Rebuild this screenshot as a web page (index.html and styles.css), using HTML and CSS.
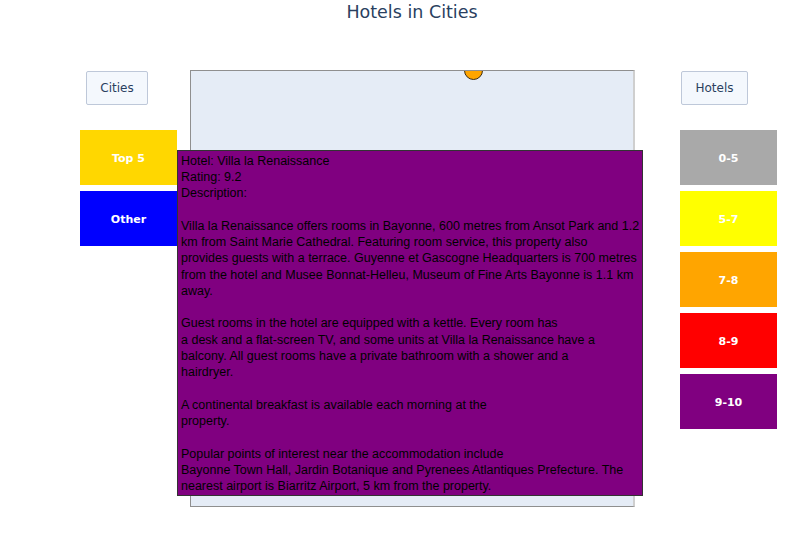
FILE: index.html
```html
<!DOCTYPE html>
<html>
<head>
<meta charset="utf-8">
<link rel="stylesheet" href="styles.css">
</head>
<body>
<div class="page">
  <div class="title">Hotels in Cities</div>
  <div class="main">
    <div class="col col-left">
      <div class="menu-btn btn-cities">Cities</div>
      <div class="boxes">
        <div class="box c-gold">Top 5</div>
        <div class="box c-blue">Other</div>
      </div>
    </div>
    <div class="map">
      <div class="dot"></div>
    </div>
    <div class="col col-right">
      <div class="menu-btn btn-hotels">Hotels</div>
      <div class="boxes">
        <div class="box c-gray">0-5</div>
        <div class="box c-yellow">5-7</div>
        <div class="box c-orange">7-8</div>
        <div class="box c-red">8-9</div>
        <div class="box c-purple">9-10</div>
      </div>
    </div>
  </div>
  <div class="tooltip">Hotel: Villa la Renaissance<br>Rating: 9.2<br>Description:<br><br>Villa la Renaissance offers rooms in Bayonne, 600 metres from Ansot Park and 1.2<br>km from Saint Marie Cathedral. Featuring room service, this property also<br>provides guests with a terrace. Guyenne et Gascogne Headquarters is 700 metres<br>from the hotel and Musee Bonnat-Helleu, Museum of Fine Arts Bayonne is 1.1 km<br>away.<br><br>Guest rooms in the hotel are equipped with a kettle. Every room has<br>a desk and a flat-screen TV, and some units at Villa la Renaissance have a<br>balcony. All guest rooms have a private bathroom with a shower and a<br>hairdryer.<br><br>A continental breakfast is available each morning at the<br>property.<br><br>Popular points of interest near the accommodation include<br>Bayonne Town Hall, Jardin Botanique and Pyrenees Atlantiques Prefecture. The<br>nearest airport is Biarritz Airport, 5 km from the property.</div>
</div>
</body>
</html>
```
FILE: styles.css
```css
* { box-sizing: border-box; }
html, body { margin: 0; padding: 0; background: #fff; }
.page {
  position: relative;
  width: 804px;
  height: 556px;
  overflow: hidden;
  font-family: "DejaVu Sans", Verdana, sans-serif;
  color: #2a3f5f;
}
.title {
  height: 70px;
  padding-top: 2px;
  padding-left: 20px;
  font-size: 17.5px;
  line-height: 20px;
  text-align: center;
}
.main {
  display: flex;
  align-items: flex-start;
}
.col {
  width: 97px;
  display: flex;
  flex-direction: column;
}
.col-left { margin-left: 80px; }
.col-right { margin-left: 45px; }
.menu-btn {
  margin-top: 1px;
  height: 34px;
  display: flex;
  align-items: center;
  justify-content: center;
  background: #f4f8fd;
  border: 1px solid #bec8d9;
  border-radius: 2px;
  font-size: 12px;
}
.btn-cities { width: 62px; margin-left: 6px; }
.btn-hotels { width: 67px; margin-left: 1px; }
.boxes {
  margin-top: 25px;
  display: flex;
  flex-direction: column;
  gap: 6px;
}
.box {
  height: 55px;
  display: flex;
  align-items: center;
  justify-content: center;
  color: #fff;
  font-weight: bold;
  font-size: 11px;
  padding-top: 2px;
}
.c-gold { background: #ffd700; }
.c-blue { background: #0000ff; }
.c-gray { background: #a9a9a9; }
.c-yellow { background: #ffff00; }
.c-orange { background: #ffa500; }
.c-red { background: #ff0000; }
.c-purple { background: #800080; }
.map {
  position: relative;
  margin-left: 13px;
  width: 445px;
  height: 437px;
  background: #e5ecf6;
  border: 1px solid #8f8f8f;
  border-right: 2px solid #cfcfcf;
  overflow: hidden;
}
.dot {
  position: absolute;
  left: 273px;
  top: -10px;
  width: 19px;
  height: 19px;
  border-radius: 50%;
  background: #ffa500;
  border: 1px solid #3a2a10;
}
.tooltip {
  position: absolute;
  left: 177px;
  top: 150px;
  width: 466px;
  height: 346px;
  background: #800080;
  border: 1px solid #333;
  padding: 1.5px 0 0 3px;
  font-family: "Liberation Sans", Arial, sans-serif;
  font-size: 12.5px;
  line-height: 16.3px;
  color: #000;
  white-space: nowrap;
}
```
